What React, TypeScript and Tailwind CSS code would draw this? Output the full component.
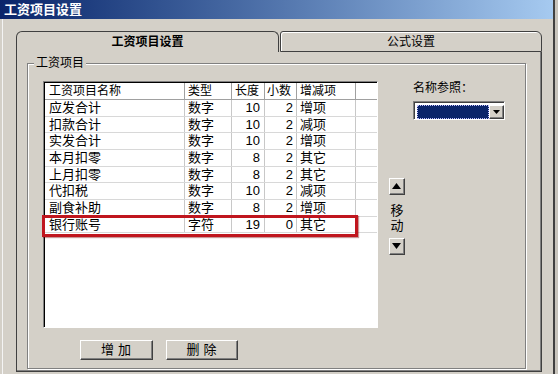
import React from "react";

const rows = [
  ["应发合计", "数字", "10", "2", "增项"],
  ["扣款合计", "数字", "10", "2", "减项"],
  ["实发合计", "数字", "10", "2", "增项"],
  ["本月扣零", "数字", "8", "2", "其它"],
  ["上月扣零", "数字", "8", "2", "其它"],
  ["代扣税", "数字", "10", "2", "减项"],
  ["副食补助", "数字", "8", "2", "增项"],
  ["银行账号", "字符", "19", "0", "其它"],
];

const font = { fontFamily: '"Liberation Sans", "Noto Sans CJK SC", sans-serif' };

function Raised({ className = "", children }: { className?: string; children?: React.ReactNode }) {
  return (
    <div className={"border border-t-white border-l-white border-r-[#404040] border-b-[#404040] bg-[#d4d0c8] " + className}>
      <div className="w-full h-full border-r border-b border-[#808080] flex items-center justify-center">{children}</div>
    </div>
  );
}

export default function App() {
  return (
    <div className="w-[558px] h-[374px] bg-[#d4d0c8] overflow-hidden flex flex-row text-black" style={font}>
      <div className="w-[553px] h-full flex flex-col">
        <div className="h-[19px] w-full bg-gradient-to-r from-[#0a246a] to-[#a6caf0] flex items-center pl-[4px]">
          <span className="text-white font-bold text-[13px] leading-none">工资项目设置</span>
        </div>
        <div className="flex flex-row flex-1">
          <div className="w-[2px]" />
          <div className="w-[1px] bg-[#f4f4f4]" />
          <div className="w-[13px]" />
          <div className="flex flex-col pt-[12px]">
            {/* Tabs */}
            <div className="flex flex-row h-[21px]">
              <div className="w-[263px] h-full border-l border-t border-r border-[#404040] rounded-tl-[6px] rounded-tr-[6px] flex items-center justify-center">
                <span className="font-bold text-[12px] leading-none">工资项目设置</span>
              </div>
              <div className="w-[1px]" />
              <div className="w-[262px] h-full border-t border-r border-l border-b border-[#404040] rounded-tr-[6px] rounded-tl-[3px] flex items-center justify-center shadow-[inset_1px_1px_0_#fff]">
                <span className="text-[12px] leading-none">公式设置</span>
              </div>
            </div>
            {/* Panel */}
            <div className="w-[526px] h-[320px] border-l border-r border-b border-[#404040] shadow-[inset_-1px_-1px_0_#808080]">
              <div className="relative ml-[10px] mt-[11px] w-[499px] h-[306px] border border-[#808080] shadow-[inset_1px_1px_0_#fff,1px_1px_0_#fff]">
                <div className="absolute left-[6px] top-[-7px] bg-[#d4d0c8] px-[2px] text-[12px] leading-[13px]">工资项目</div>
                <div className="flex flex-col pl-[15px] pt-[17px]">
                  <div className="flex flex-row">
                    {/* List view */}
                    <div className="relative w-[335px] h-[247px] bg-white border border-t-[#808080] border-l-[#808080] border-r-white border-b-white">
                      <div className="w-full h-full border-t border-l border-black">
                        <div className="flex flex-row h-[17px] text-[12px] leading-[16px] border-b border-[#a0a0a0]">
                          <div className="w-[140px] pl-[4px] border-r border-[#a0a0a0]">工资项目名称</div>
                          <div className="w-[47px] pl-[3px] border-r border-[#a0a0a0]">类型</div>
                          <div className="w-[33px] pl-[3px] border-r border-[#a0a0a0]">长度</div>
                          <div className="w-[32px] pl-[2px] border-r border-[#a0a0a0]">小数</div>
                          <div className="w-[59px] pl-[3px] border-r border-[#a0a0a0]">增减项</div>
                        </div>
                        {rows.map((r, i) => (
                          <div key={i} className="flex flex-row h-[16.67px] text-[13px] leading-[16px] border-b border-[#d8d8d8]">
                            <div className="w-[140px] pl-[4px] border-r border-[#c8c8c8] whitespace-nowrap">{r[0]}</div>
                            <div className="w-[47px] pl-[3px] border-r border-[#c8c8c8]">{r[1]}</div>
                            <div className="w-[33px] pr-[4px] text-right border-r border-[#c8c8c8]">{r[2]}</div>
                            <div className="w-[32px] pr-[3px] text-right border-r border-[#c8c8c8]">{r[3]}</div>
                            <div className="w-[59px] pl-[3px] border-r border-[#c8c8c8]">{r[4]}</div>
                          </div>
                        ))}
                      </div>
                      <div className="absolute left-[-2px] top-[133px] w-[316px] h-[22px] border-[3px] border-[#c0161e] shadow-[1px_1px_1px_rgba(120,0,0,0.4)]" />
                    </div>
                    {/* Move buttons */}
                    <div className="flex flex-col items-center ml-[11px] mt-[97px] w-[16px]">
                      <Raised className="w-[16px] h-[17px]">
                        <svg width="9" height="6" viewBox="0 0 9 6"><path d="M4.5 0 L9 6 L0 6 Z" fill="#000" /></svg>
                      </Raised>
                      <div className="text-[13px] leading-[15px] mt-[8px] flex flex-col items-center">
                        <span>移</span>
                        <span>动</span>
                      </div>
                      <Raised className="w-[16px] h-[17px] mt-[5px]">
                        <svg width="9" height="6" viewBox="0 0 9 6"><path d="M0 0 L9 0 L4.5 6 Z" fill="#000" /></svg>
                      </Raised>
                    </div>
                    {/* Name reference */}
                    <div className="flex flex-col ml-[8px] mt-[1px]">
                      <div className="text-[12px] leading-[13px] whitespace-nowrap">名称参照：</div>
                      <div className="mt-[6px] w-[92px] h-[19px] border border-t-[#808080] border-l-[#808080] border-r-white border-b-white">
                        <div className="w-full h-full border-t border-l border-[#404040] bg-white flex flex-row p-[2px] pr-0 pb-0">
                          <div className="flex-1 bg-[#0a246a] border border-dotted border-[#c0c0ff]" />
                          <Raised className="w-[15px] h-full">
                            <svg width="7" height="4" viewBox="0 0 7 4"><path d="M0 0 L7 0 L3.5 4 Z" fill="#000" /></svg>
                          </Raised>
                        </div>
                      </div>
                    </div>
                  </div>
                  {/* Bottom buttons */}
                  <div className="flex flex-row ml-[37px] mt-[12px] gap-[13px]">
                    <Raised className="w-[73px] h-[20px]">
                      <span className="text-[13px] leading-none tracking-[4px] pl-[4px]">增加</span>
                    </Raised>
                    <Raised className="w-[72px] h-[20px]">
                      <span className="text-[13px] leading-none tracking-[4px] pl-[4px]">删除</span>
                    </Raised>
                  </div>
                </div>
              </div>
            </div>
          </div>
        </div>
      </div>
      <div className="w-[2px] h-full bg-[#404040]" />
      <div className="w-[3px] h-full bg-[#c8c4bc]" />
    </div>
  );
}
